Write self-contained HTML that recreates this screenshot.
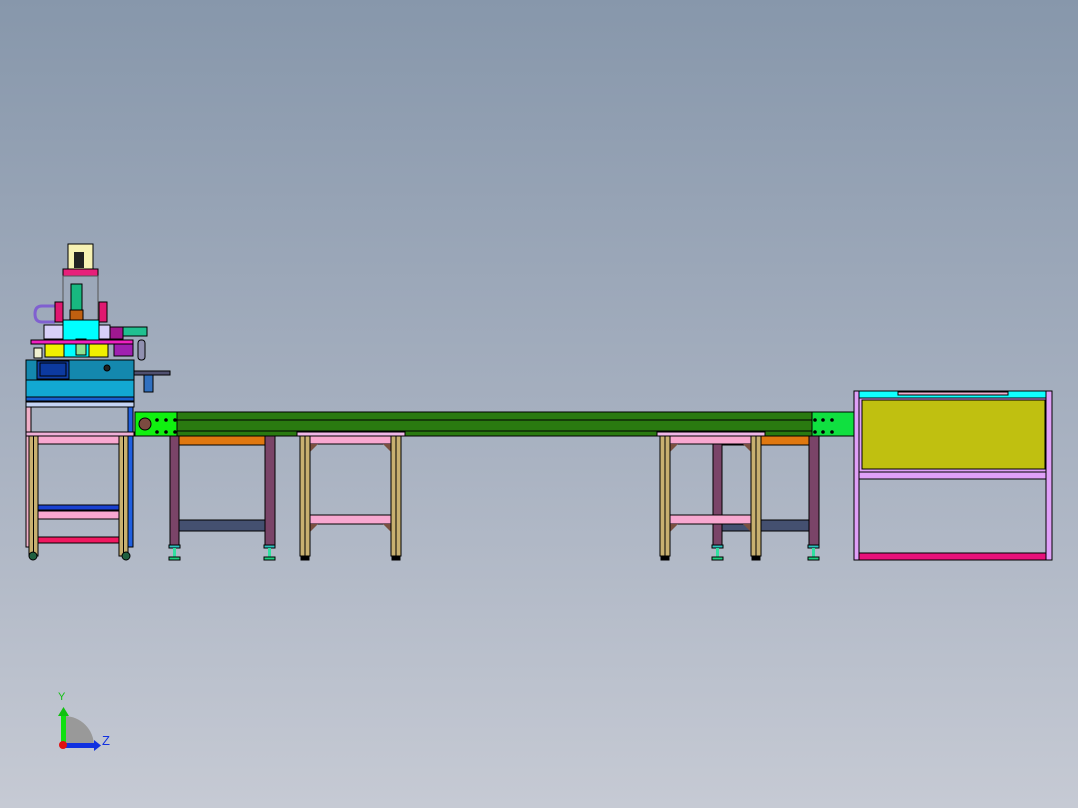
<!DOCTYPE html>
<html><head><meta charset="utf-8"><style>
html,body{margin:0;padding:0;width:1078px;height:808px;overflow:hidden}
svg{display:block}
</style></head><body>
<svg width="1078" height="808" viewBox="0 0 1078 808" xmlns="http://www.w3.org/2000/svg">
<defs>
<linearGradient id="bg" x1="0" y1="0" x2="0" y2="1">
<stop offset="0" stop-color="#8797ab"/><stop offset="0.5" stop-color="#a5afbf"/><stop offset="1" stop-color="#c6cad4"/>
</linearGradient>
</defs>
<rect width="1078" height="808" fill="url(#bg)"/>
<g stroke="#000" stroke-width="1">
<rect x="68" y="244" width="25" height="25" fill="#f7f2b4"/>
<rect x="74" y="252" width="10" height="16" fill="#222" stroke="none"/>
<rect x="63" y="269" width="35" height="7" fill="#e8207a"/>
<rect x="63" y="276" width="35" height="46" fill="none" stroke="#555"/>
<rect x="71" y="284" width="11" height="26" fill="#18b880"/>
<rect x="70" y="310" width="13" height="10" fill="#c06010"/>
<path d="M55 306 H42 Q35 306 35 314 Q35 322 42 322 H55" fill="none" stroke="#8060d0" stroke-width="3"/>
<rect x="55" y="302" width="8" height="20" fill="#e01870"/>
<rect x="99" y="302" width="8" height="20" fill="#e01870"/>
<rect x="44" y="325" width="66" height="14" fill="#d8d0f8"/>
<rect x="63" y="320" width="36" height="37" fill="#00ffff"/>
<rect x="76" y="339" width="10" height="16" fill="#90e090"/>
<rect x="110" y="327" width="13" height="12" fill="#a01890"/>
<rect x="123" y="327" width="24" height="9" fill="#20c090"/>
<rect x="31" y="340" width="102" height="4" fill="#f020c0"/>
<rect x="45" y="344" width="19" height="13" fill="#f0f000"/>
<rect x="89" y="344" width="19" height="13" fill="#f0f000"/>
<rect x="114" y="344" width="19" height="12" fill="#a020b0"/>
<rect x="34" y="348" width="8" height="10" fill="#f0f0d0"/>
<rect x="138" y="340" width="7" height="20" rx="3" fill="#9090b0"/>
<rect x="26" y="360" width="108" height="20" fill="#1488ae"/>
<rect x="37" y="361" width="32" height="18" fill="#1040a8"/>
<rect x="40" y="363" width="26" height="13" fill="#0c3aa0"/>
<circle cx="107" cy="368" r="3" fill="#222"/>
<rect x="26" y="380" width="108" height="17" fill="#12a8d2"/>
<rect x="26" y="397" width="108" height="4" fill="#1860d0"/>
<rect x="26" y="402" width="108" height="5" fill="#c4d4f4"/>
<rect x="134" y="371" width="36" height="4" fill="#505070"/>
<rect x="144" y="375" width="9" height="17" fill="#3070c0"/>
<rect x="26" y="407" width="5" height="140" fill="#f0b0c8"/>
<rect x="128" y="407" width="5" height="140" fill="#2060e0"/>
<rect x="26" y="432" width="108" height="4" fill="#f0b0d8"/>
<rect x="38" y="436" width="81" height="8" fill="#f8a8d0"/>
<rect x="38" y="505" width="81" height="5" fill="#1840d0"/>
<rect x="38" y="511" width="81" height="8" fill="#f8a8d0"/>
<rect x="38" y="537" width="81" height="6" fill="#f01860"/>
<rect x="29" y="436" width="9" height="120" fill="#c8b070"/>
<rect x="119" y="436" width="9" height="120" fill="#c8b070"/>
<line x1="33.5" y1="436" x2="33.5" y2="556"/><line x1="123.5" y1="436" x2="123.5" y2="556"/>
<circle cx="33" cy="556" r="4" fill="#206040"/>
<circle cx="126" cy="556" r="4" fill="#206040"/>
<rect x="135" y="412" width="42" height="24" fill="#10f010"/>
<circle cx="145" cy="424" r="6" fill="#7a4a40"/>
<rect x="177" y="412" width="635" height="24" fill="#2a7a10"/>
<line x1="177" y1="420" x2="812" y2="420"/>
<line x1="177" y1="431" x2="812" y2="431"/>
<rect x="812" y="412" width="42" height="24" fill="#10e040"/>
<g fill="#000" stroke="none">
<circle cx="157" cy="420" r="1.8"/><circle cx="166" cy="420" r="1.8"/><circle cx="175" cy="420" r="1.8"/>
<circle cx="157" cy="432" r="1.8"/><circle cx="166" cy="432" r="1.8"/><circle cx="175" cy="432" r="1.8"/>
<circle cx="815" cy="420" r="1.8"/><circle cx="823" cy="420" r="1.8"/><circle cx="832" cy="420" r="1.8"/>
<circle cx="815" cy="432" r="1.8"/><circle cx="823" cy="432" r="1.8"/><circle cx="832" cy="432" r="1.8"/>
</g>
<rect x="179" y="436" width="86" height="9" fill="#e07810"/>
<rect x="179" y="520" width="86" height="11" fill="#445070"/>
<rect x="170" y="436" width="9" height="109" fill="#7a4468"/>
<rect x="265" y="436" width="10" height="109" fill="#7a4468"/>
<rect x="169" y="545" width="11" height="3" fill="#30c0c0"/><rect x="173" y="548" width="3" height="9" fill="#30e0a0" stroke="none"/><rect x="169" y="557" width="11" height="3" fill="#20d080"/>
<rect x="264" y="545" width="11" height="3" fill="#30c0c0"/><rect x="268" y="548" width="3" height="9" fill="#30e0a0" stroke="none"/><rect x="264" y="557" width="11" height="3" fill="#20d080"/>
<rect x="722" y="436" width="87" height="9" fill="#e07810"/>
<rect x="722" y="520" width="87" height="11" fill="#445070"/>
<rect x="713" y="436" width="9" height="109" fill="#7a4468"/>
<rect x="809" y="436" width="10" height="109" fill="#7a4468"/>
<rect x="712" y="545" width="11" height="3" fill="#30c0c0"/><rect x="716" y="548" width="3" height="9" fill="#30e0a0" stroke="none"/><rect x="712" y="557" width="11" height="3" fill="#20d080"/>
<rect x="808" y="545" width="11" height="3" fill="#30c0c0"/><rect x="812" y="548" width="3" height="9" fill="#30e0a0" stroke="none"/><rect x="808" y="557" width="11" height="3" fill="#20d080"/>
<g id="t1">
<rect x="297" y="432" width="108" height="4" fill="#f0b8e8"/>
<rect x="310" y="436" width="81" height="8" fill="#f8a8d0"/>
<rect x="310" y="515" width="81" height="9" fill="#f8a8d0"/>
<polygon points="310,444 318,444 310,452" fill="#7a5040" stroke="none"/>
<polygon points="391,444 383,444 391,452" fill="#7a5040" stroke="none"/>
<polygon points="310,524 318,524 310,532" fill="#7a5040" stroke="none"/>
<polygon points="391,524 383,524 391,532" fill="#7a5040" stroke="none"/>
<rect x="300" y="436" width="10" height="120" fill="#c8b070"/>
<rect x="391" y="436" width="10" height="120" fill="#c8b070"/>
<line x1="305" y1="436" x2="305" y2="556"/><line x1="396" y1="436" x2="396" y2="556"/>
<rect x="301" y="556" width="8" height="4" fill="#000"/>
<rect x="392" y="556" width="8" height="4" fill="#000"/>
</g>
<use href="#t1" x="360"/>
<rect x="854" y="391" width="198" height="169" fill="none" stroke="#000"/>
<rect x="854" y="391" width="5" height="169" fill="#e0a0f8"/>
<rect x="1046" y="391" width="6" height="169" fill="#e0a0f8"/>
<rect x="859" y="391" width="187" height="7" fill="#10ffff"/>
<rect x="898" y="392" width="110" height="3" fill="#f0b0d0"/>
<rect x="859" y="398" width="187" height="74" fill="#e0a0f8"/>
<rect x="862" y="400" width="183" height="69" fill="#c0c010"/>
<rect x="859" y="472" width="187" height="7" fill="#e0a0f8"/>
<rect x="859" y="553" width="187" height="7" fill="#e8107a"/>
</g>
<path d="M64 716 A30 30 0 0 1 94 746 L64 746 Z" fill="#999"/>
<rect x="61" y="716" width="5" height="30" fill="#10e010"/>
<polygon points="58,716 63.5,707 69,716" fill="#10c010"/>
<rect x="64" y="743" width="30" height="5" fill="#1030e0"/>
<polygon points="94,740 101,745.5 94,751" fill="#1030e0"/>
<circle cx="63" cy="745" r="4" fill="#e01010"/>
<text x="58" y="700" font-family="Liberation Sans, sans-serif" font-size="11" fill="#10c010">Y</text>
<text x="102" y="745" font-family="Liberation Sans, sans-serif" font-size="13" fill="#1030e0">Z</text>
</svg>
</body></html>
